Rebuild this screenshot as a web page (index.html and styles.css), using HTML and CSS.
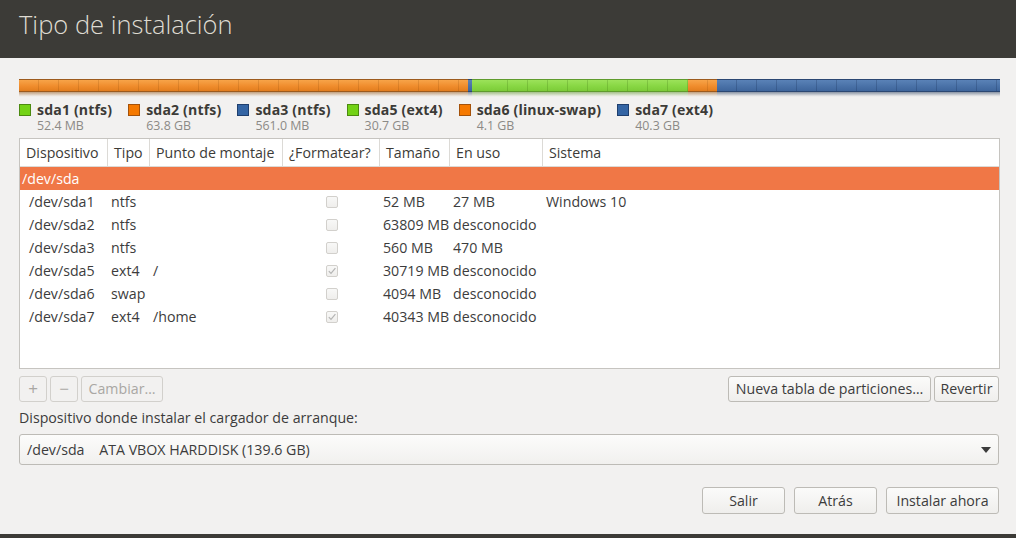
FILE: index.html
```html
<!DOCTYPE html>
<html lang="es">
<head>
<meta charset="utf-8">
<title>Tipo de instalación</title>
<link rel="stylesheet" href="styles.css">
</head>
<body>
<div class="window">
  <header class="titlebar"><h1>Tipo de instalación</h1></header>
  <main class="content">
    <div class="partbar">
      <div class="seg seg-orange s-sda2"><div class="seg-fill"></div><div class="seg-refl"></div></div>
      <div class="seg seg-blue s-sda3"><div class="seg-fill"></div><div class="seg-refl"></div></div>
      <div class="seg seg-green s-sda5"><div class="seg-fill"></div><div class="seg-refl"></div></div>
      <div class="seg seg-orange s-sda6"><div class="seg-fill"></div><div class="seg-refl"></div></div>
      <div class="seg seg-blue s-sda7"><div class="seg-fill"></div><div class="seg-refl"></div></div>
    </div>
    <div class="legend">
      <div class="leg-item"><span class="swatch sw-green"></span><div><div class="leg-name">sda1 (ntfs)</div><div class="leg-size">52.4 MB</div></div></div>
      <div class="leg-item"><span class="swatch sw-orange"></span><div><div class="leg-name">sda2 (ntfs)</div><div class="leg-size">63.8 GB</div></div></div>
      <div class="leg-item"><span class="swatch sw-blue"></span><div><div class="leg-name">sda3 (ntfs)</div><div class="leg-size">561.0 MB</div></div></div>
      <div class="leg-item"><span class="swatch sw-green"></span><div><div class="leg-name">sda5 (ext4)</div><div class="leg-size">30.7 GB</div></div></div>
      <div class="leg-item"><span class="swatch sw-orange"></span><div><div class="leg-name">sda6 (linux-swap)</div><div class="leg-size">4.1 GB</div></div></div>
      <div class="leg-item"><span class="swatch sw-blue"></span><div><div class="leg-name">sda7 (ext4)</div><div class="leg-size">40.3 GB</div></div></div>
    </div>

    <div class="table">
      <div class="thead row">
        <div class="c c1">Dispositivo</div>
        <div class="c c2">Tipo</div>
        <div class="c c3">Punto de montaje</div>
        <div class="c c4">¿Formatear?</div>
        <div class="c c5">Tamaño</div>
        <div class="c c6">En uso</div>
        <div class="c c7">Sistema</div>
      </div>
      <div class="disk-row">/dev/sda</div>
      <div class="row prow">
        <div class="c c1">/dev/sda1</div><div class="c c2">ntfs</div><div class="c c3"></div>
        <div class="c c4"><span class="chk"></span></div>
        <div class="c c5">52 MB</div><div class="c c6">27 MB</div><div class="c c7">Windows 10</div>
      </div>
      <div class="row prow">
        <div class="c c1">/dev/sda2</div><div class="c c2">ntfs</div><div class="c c3"></div>
        <div class="c c4"><span class="chk"></span></div>
        <div class="c c5">63809 MB</div><div class="c c6">desconocido</div><div class="c c7"></div>
      </div>
      <div class="row prow">
        <div class="c c1">/dev/sda3</div><div class="c c2">ntfs</div><div class="c c3"></div>
        <div class="c c4"><span class="chk"></span></div>
        <div class="c c5">560 MB</div><div class="c c6">470 MB</div><div class="c c7"></div>
      </div>
      <div class="row prow">
        <div class="c c1">/dev/sda5</div><div class="c c2">ext4</div><div class="c c3">/</div>
        <div class="c c4"><span class="chk"><svg viewBox="0 0 12 12" width="12" height="12"><path d="M2.8 6.2 L5 8.4 L9.4 3.2" fill="none" stroke="#b4b4b4" stroke-width="1.2"/></svg></span></div>
        <div class="c c5">30719 MB</div><div class="c c6">desconocido</div><div class="c c7"></div>
      </div>
      <div class="row prow">
        <div class="c c1">/dev/sda6</div><div class="c c2">swap</div><div class="c c3"></div>
        <div class="c c4"><span class="chk"></span></div>
        <div class="c c5">4094 MB</div><div class="c c6">desconocido</div><div class="c c7"></div>
      </div>
      <div class="row prow">
        <div class="c c1">/dev/sda7</div><div class="c c2">ext4</div><div class="c c3">/home</div>
        <div class="c c4"><span class="chk"><svg viewBox="0 0 12 12" width="12" height="12"><path d="M2.8 6.2 L5 8.4 L9.4 3.2" fill="none" stroke="#b4b4b4" stroke-width="1.2"/></svg></span></div>
        <div class="c c5">40343 MB</div><div class="c c6">desconocido</div><div class="c c7"></div>
      </div>
    </div>

    <div class="toolbar">
      <div class="group">
        <button class="btn dis sq">+</button>
        <button class="btn dis sq">−</button>
        <button class="btn dis chg">Cambiar…</button>
      </div>
      <div class="group">
        <button class="btn newtab">Nueva tabla de particiones…</button>
        <button class="btn rev">Revertir</button>
      </div>
    </div>

    <div class="boot-label">Dispositivo donde instalar el cargador de arranque:</div>
    <div class="combo">
      <span class="combo-text">/dev/sda&nbsp;&nbsp;&nbsp;&nbsp;ATA VBOX HARDDISK (139.6 GB)</span>
      <svg class="combo-arrow" viewBox="0 0 10 6" width="10" height="6"><path d="M0 0 L10 0 L5 6 Z" fill="#3c3c3c"/></svg>
    </div>

    <div class="actions">
      <button class="btn act">Salir</button>
      <button class="btn act">Atrás</button>
      <button class="btn act inst">Instalar ahora</button>
    </div>
  </main>
  <footer class="bottombar"></footer>
</div>
</body>
</html>
```

FILE: styles.css
```css
* { box-sizing: border-box; }
html, body { margin: 0; padding: 0; }
body {
  width: 1016px;
  height: 538px;
  overflow: hidden;
  background: #f2f1f0;
  font-family: "Open Sans", "Noto Sans", sans-serif;
  font-size: 14.2px;
  color: #3c3c3c;
}
.window { display: flex; flex-direction: column; height: 538px; }
.titlebar {
  height: 58px;
  background: #3c3b37;
  padding: 6px 0 0 19px;
  flex: none;
}
.titlebar h1 {
  margin: 0;
  font-weight: 300;
  font-size: 25.5px;
  line-height: 36px;
  color: #dfdbd2;
}
.content {
  flex: 1;
  padding: 21px 16px 0 19px;
  display: flex;
  flex-direction: column;
}
.bottombar { height: 4px; background: #3c3b37; flex: none; }

/* partition bar */
.partbar { display: flex; height: 18px; }
.seg { display: flex; flex-direction: column; }
.seg-fill { height: 13px; border-top: 1px solid; border-bottom: 1px solid; }
.seg-refl { height: 5px; }
.s-sda2 { width: 449px; }
.s-sda3 { width: 4px; }
.s-sda5 { width: 216px; }
.s-sda6 { width: 29px; }
.s-sda7 { flex: 1; }
.seg-orange .seg-fill {
  border-color: #9c5a1d;
  background:
    repeating-linear-gradient(90deg, transparent 0 19px, rgba(120,60,0,0.18) 19px 20px),
    linear-gradient(#f7a449, #f08d2d 55%, #e27d1e);
}
.seg-orange .seg-refl { background: linear-gradient(rgba(150,90,30,0.55), rgba(200,160,110,0.1) 80%, transparent); }
.seg-green .seg-fill {
  border-color: #5f9b2d;
  background:
    repeating-linear-gradient(90deg, transparent 0 19px, rgba(40,90,0,0.2) 19px 20px),
    linear-gradient(#9ce25a, #88d744 55%, #7ccb38);
}
.s-sda5 .seg-fill, .s-sda7 .seg-fill { background-position: 16px 0, 0 0; }
.seg-green .seg-refl { background: linear-gradient(rgba(100,150,50,0.55), rgba(160,200,120,0.1) 80%, transparent); }
.seg-blue .seg-fill {
  border-color: #2b4772;
  background:
    repeating-linear-gradient(90deg, transparent 0 19px, rgba(20,40,80,0.25) 19px 20px),
    linear-gradient(#5a82b7, #4a72a8 55%, #3e659b);
}
.seg-blue .seg-refl { background: linear-gradient(rgba(50,70,100,0.55), rgba(140,150,170,0.1) 80%, transparent); }

/* legend */
.legend { display: flex; gap: 16px; margin-top: 4px; height: 37px; }
.leg-item { display: flex; gap: 6px; align-items: flex-start; }
.swatch { width: 12px; height: 12px; margin-top: 3px; border: 1px solid; flex: none; }
.sw-green { background: #73d216; border-color: #4c8a10; }
.sw-orange { background: #f57900; border-color: #a4520a; }
.sw-blue { background: #3465a4; border-color: #1f3f6e; }
.leg-name { font-weight: 700; font-size: 14.1px; letter-spacing: 0.15px; line-height: 17px; color: #3c3b37; }
.leg-size { font-size: 12.4px; line-height: 15px; color: #8c8a86; }

/* table */
.table {
  margin-top: 0;
  height: 231px;
  background: #fff;
  border: 1px solid #c6c4c0;
  display: flex;
  flex-direction: column;
}
.row { display: flex; }
.c { flex: none; white-space: nowrap; overflow: hidden; }
.c1 { width: 88px; }
.c2 { width: 42px; }
.c3 { width: 133px; }
.c4 { width: 97px; }
.c5 { width: 70px; }
.c6 { width: 93px; }
.c7 { flex: 1; }
.thead { height: 28px; border-bottom: 1px solid #dcdad6; }
.thead .c {
  line-height: 27px;
  padding-left: 6px;
  border-right: 1px solid #dcdad6;
  color: #3c3b37;
}
.thead .c7 { border-right: none; }
.disk-row {
  height: 23px;
  line-height: 23px;
  background: #f07746;
  color: #fff;
  padding-left: 2px;
}
.prow { height: 23px; line-height: 23px; }
.prow .c { padding-left: 3px; }
.prow .c1 { padding-left: 9px; }
.prow .c4 { display: flex; align-items: center; padding-left: 43px; }
.chk {
  width: 12px; height: 12px;
  border: 1px solid #d2d0cc;
  border-radius: 2px;
  background: linear-gradient(#f8f8f7, #efeeec);
  display: flex;
}
.chk svg { margin: -1px; }

/* buttons */
.btn {
  font-family: inherit;
  font-size: 14.2px;
  color: #3c3c3c;
  background: linear-gradient(#fbfbfa, #efeeec);
  border: 1px solid #bdbbb6;
  border-radius: 3px;
  height: 26px;
  padding: 0 4px;
  line-height: 22px;
  white-space: nowrap;
}
.btn.dis { color: #a9a7a3; border-color: #d2d0cc; background: #f2f1f0; }
.toolbar { display: flex; justify-content: space-between; margin-top: 7px; padding-right: 1px; }
.group { display: flex; gap: 3px; }
.sq { width: 28px; padding: 0; font-size: 17px; }
.chg { width: 82px; }
.newtab { width: 203px; }
.rev { width: 65px; }
.boot-label { margin-top: 6px; line-height: 19px; }
.combo {
  margin-top: 7px;
  height: 31px;
  border: 1px solid #bdbbb6;
  border-radius: 3px;
  background: linear-gradient(#fcfcfb, #f1f0ee);
  display: flex;
  align-items: center;
  justify-content: space-between;
  padding: 0 7px 0 7px;
  margin-right: 1px;
}
.combo-arrow { flex: none; }
.actions { display: flex; justify-content: flex-end; gap: 9px; margin-top: 22px; padding-right: 1px; }
.act { width: 83px; height: 27px; }
.inst { width: 113px; }
```
